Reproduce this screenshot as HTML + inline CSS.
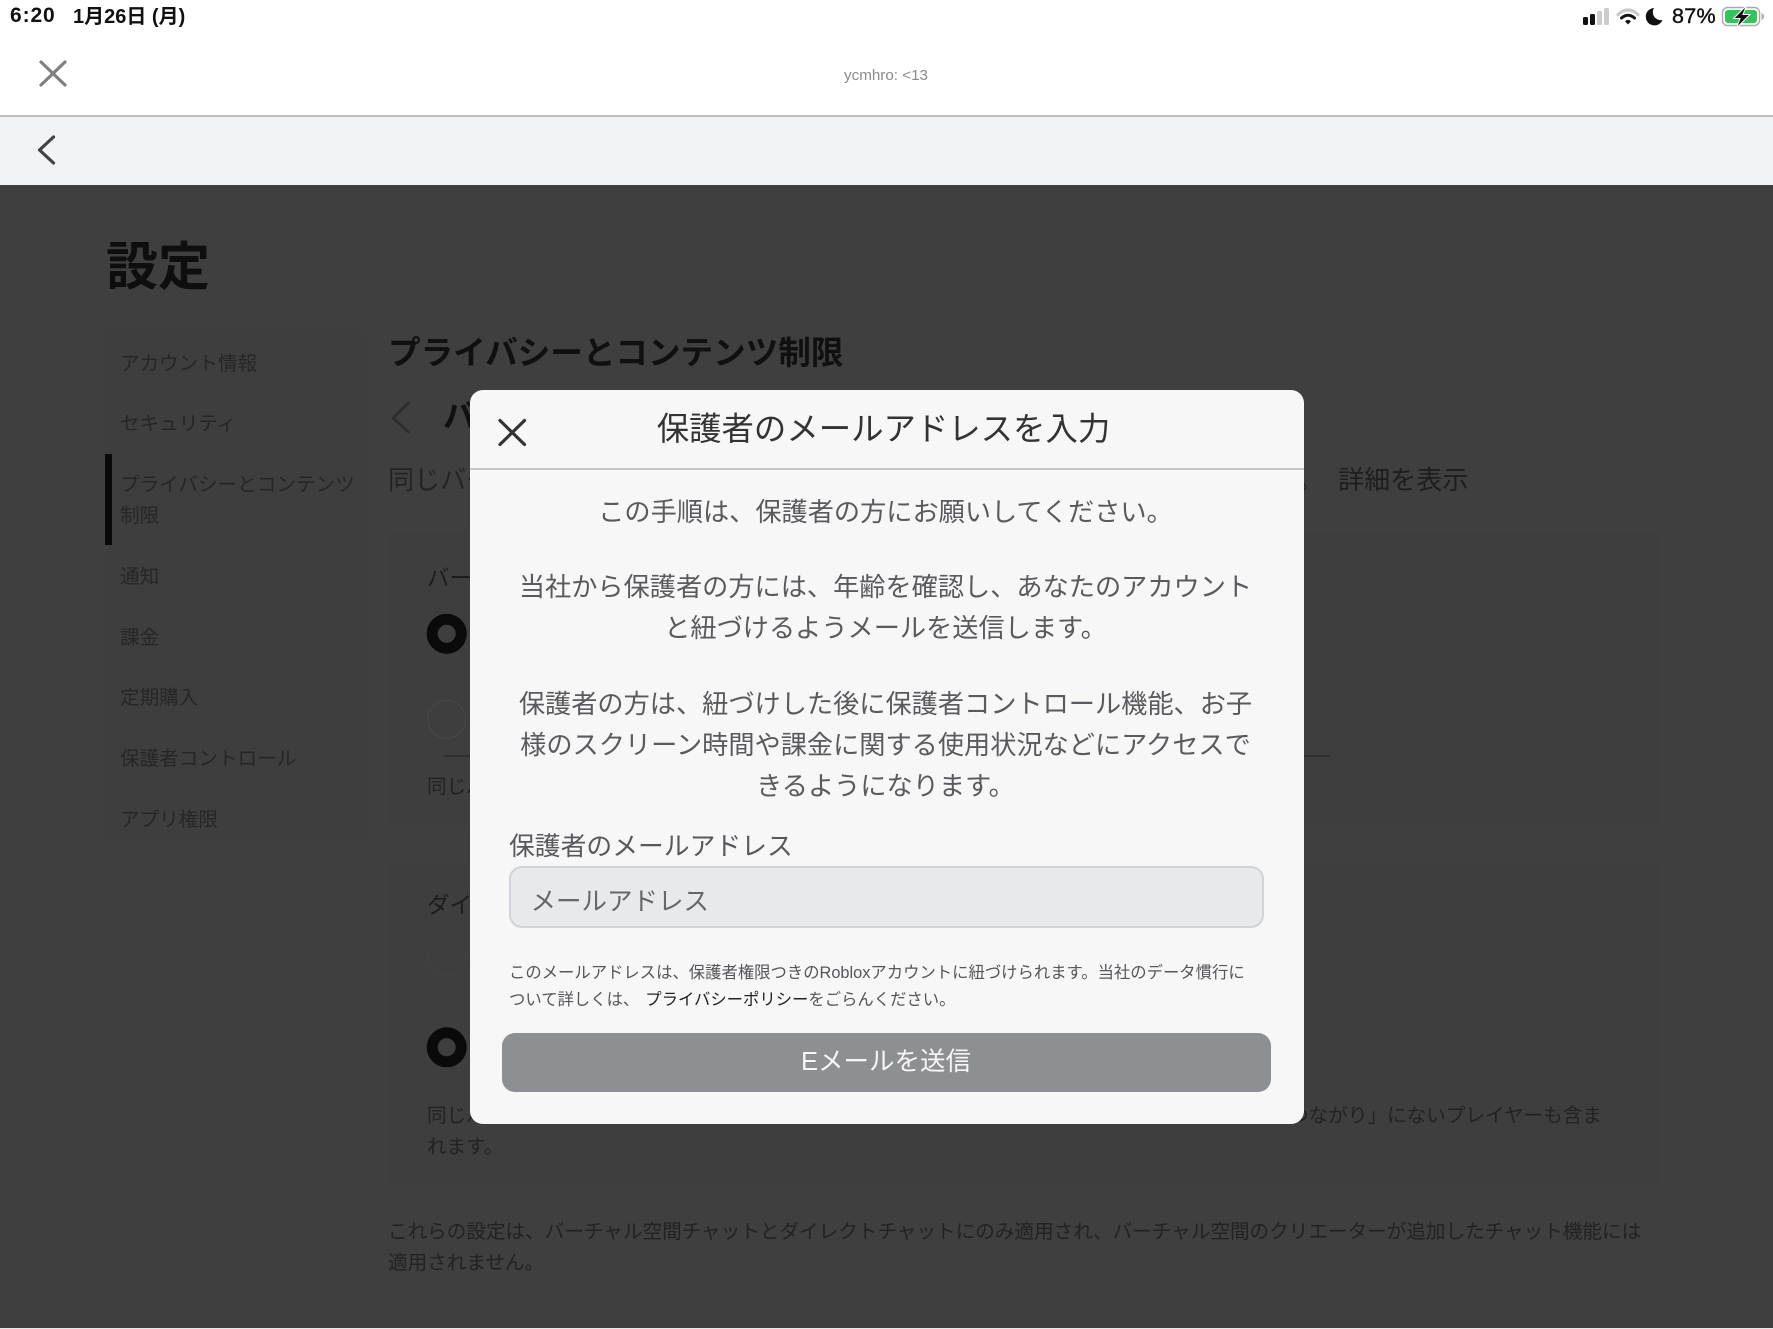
<!DOCTYPE html>
<html lang="ja">
<head>
<meta charset="utf-8">
<title>保護者のメールアドレスを入力</title>
<style>
html,body{margin:0;padding:0;background:#3f3f3f;}
body{width:1773px;height:1329px;position:relative;overflow:hidden;font-family:"Liberation Sans","Noto Sans CJK JP",sans-serif;}
.a{position:absolute;white-space:nowrap;}
.s{font-size:19.6px;line-height:32px;height:32px;color:#262626;left:120px;}
.d{font-size:19.6px;line-height:32px;height:32px;color:#222;}
.m{left:470px;width:833px;text-align:center;font-size:26.2px;line-height:40px;height:40px;color:#5a5a5e;}
</style>
</head>
<body>
<!-- top chrome -->
<div class="a" style="left:0;top:0;width:1773px;height:115px;background:#fff;"></div>
<div class="a" style="left:0;top:115px;width:1773px;height:1.5px;background:#bdbec0;"></div>
<div class="a" style="left:0;top:116.5px;width:1773px;height:68.5px;background:#f2f3f5;"></div>
<div class="a" style="left:10px;top:3px;font-size:21px;line-height:26px;font-weight:700;color:#111;letter-spacing:.9px;">6:20</div>
<div class="a" style="left:73px;top:4px;font-size:20px;line-height:26px;font-weight:700;color:#111;">1月26日 (月)</div>
<div class="a" style="left:786px;width:200px;top:66px;text-align:center;font-size:15.2px;line-height:20px;color:#8a8a8a;">ycmhro: &lt;13</div>

<svg class="a" style="left:0;top:0" width="1773" height="190" viewBox="0 0 1773 190">
  <path d="M41 62L65 85M65 62L41 85" stroke="#808080" stroke-width="3.2" stroke-linecap="round" fill="none"/>
  <path d="M53.5 137L39.5 150L53.5 163" stroke="#404246" stroke-width="3.2" stroke-linecap="round" stroke-linejoin="round" fill="none"/>
  <!-- signal -->
  <rect x="1583" y="17" width="5" height="8" rx="1.5" fill="#111"/>
  <rect x="1590" y="14" width="5" height="11" rx="1.5" fill="#111"/>
  <rect x="1597" y="11" width="5" height="14" rx="1.5" fill="#ccc"/>
  <rect x="1604" y="8" width="5" height="17" rx="1.5" fill="#ccc"/>
  <!-- wifi -->
  <path d="M1618 14.5Q1628 5.5 1638 14.5" stroke="#c8c8c8" stroke-width="3" fill="none" stroke-linecap="round"/>
  <path d="M1621.5 18Q1628 12.5 1634.5 18" stroke="#111" stroke-width="3" fill="none" stroke-linecap="round"/>
  <path d="M1625 21.2Q1628 18.6 1631 21.2L1628 24.5Z" fill="#111"/>
  <!-- moon -->
  <path d="M1654 8A8.7 8.7 0 1 0 1662.5 20A8 8 0 0 1 1654 8Z" fill="#111"/>
  <!-- battery -->
  <rect x="1722.5" y="7.5" width="37" height="18" rx="5" fill="none" stroke="#aaa" stroke-width="1.4"/>
  <rect x="1725" y="10" width="32" height="13" rx="3" fill="#38c25e"/>
  <path d="M1761.5 13V20Q1764 19 1764 16.5Q1764 14 1761.5 13Z" fill="#aaa"/>
  <path d="M1746.5 5.5L1733.5 18.5H1740L1736.5 28L1750 14.5H1743Z" fill="#111" stroke="#fff" stroke-width="1"/>
</svg>
<div class="a" style="left:1672px;top:3px;font-size:21.5px;line-height:26px;color:#111;font-weight:400;letter-spacing:.3px;-webkit-text-stroke:.4px #111;">87%</div>

<!-- dim background -->
<div class="a" style="left:0;top:185px;width:1773px;height:1143px;background:#3f3f3f;"></div>
<div class="a" style="left:0;top:1328px;width:1773px;height:1px;background:#e8e8e8;"></div>
<div class="a" style="left:105px;top:330px;width:260px;height:510px;background:#3e3e3e;"></div>
<div class="a" style="left:388px;top:532px;width:1272px;height:295px;background:#3e3e3e;"></div>
<div class="a" style="left:388px;top:862px;width:1272px;height:325px;background:#3e3e3e;"></div>

<div class="a" style="left:106px;top:232px;font-size:52px;line-height:72px;font-weight:700;color:#0e0e0e;">設定</div>

<!-- sidebar -->
<div class="a s" style="top:348px;">アカウント情報</div>
<div class="a s" style="top:408px;">セキュリティ</div>
<div class="a" style="left:105px;top:454px;width:7px;height:91px;background:#0a0a0a;"></div>
<div class="a s" style="top:469px;">プライバシーとコンテンツ</div>
<div class="a s" style="top:500px;">制限</div>
<div class="a s" style="top:561px;">通知</div>
<div class="a s" style="top:622px;">課金</div>
<div class="a s" style="top:682px;">定期購入</div>
<div class="a s" style="top:743px;">保護者コントロール</div>
<div class="a s" style="top:804px;">アプリ権限</div>

<!-- main behind modal -->
<div class="a" style="left:388px;top:330px;font-size:32.6px;line-height:46px;font-weight:700;color:#101010;">プライバシーとコンテンツ制限</div>
<svg class="a" style="left:380px;top:390px" width="40" height="50" viewBox="0 0 40 50">
  <path d="M28.5 13L13 28L28.5 42" stroke="#2c2c2c" stroke-width="2.6" fill="none" stroke-linecap="round" stroke-linejoin="round"/>
</svg>
<div class="a" style="left:443px;top:393px;font-size:32.6px;line-height:46px;font-weight:700;color:#101010;">バーチャル</div>
<div class="a" style="left:388px;top:461px;font-size:26.1px;line-height:38px;color:#242424;">同じバーチャル空間</div>
<div class="a" style="left:1297px;top:461px;font-size:26.1px;line-height:38px;color:#242424;">。</div>
<div class="a" style="left:1338px;top:461px;font-size:26.1px;line-height:38px;color:#1e1e1e;">詳細を表示</div>

<div class="a" style="left:427px;top:562px;font-size:22.5px;line-height:34px;color:#1c1c1c;">バーチャル</div>
<div class="a" style="left:427px;top:889px;font-size:22.5px;line-height:34px;color:#1c1c1c;">ダイレクト</div>
<svg class="a" style="left:0;top:0" width="1773" height="1329" viewBox="0 0 1773 1329">
  <circle cx="446.7" cy="633.7" r="14.5" fill="none" stroke="#0a0a0a" stroke-width="11"/>
  <circle cx="446.7" cy="719.3" r="19" fill="none" stroke="#474747" stroke-width="1.2"/>
  <circle cx="446.7" cy="957" r="19" fill="none" stroke="#424242" stroke-width="1"/>
  <circle cx="446.7" cy="1047.3" r="14.5" fill="none" stroke="#0a0a0a" stroke-width="11"/>
  <rect x="444" y="755" width="886" height="2" fill="#303030"/>
</svg>
<div class="a d" style="left:427px;top:771px;">同じバーチャル</div>
<div class="a d" style="left:427px;top:1100px;">同じバーチャル</div>
<div class="a d" style="right:171px;top:1100px;">「つながり」にないプレイヤーも含ま</div>
<div class="a d" style="left:427px;top:1131px;">れます。</div>
<div class="a d" style="left:388px;top:1216px;">これらの設定は、バーチャル空間チャットとダイレクトチャットにのみ適用され、バーチャル空間のクリエーターが追加したチャット機能には</div>
<div class="a d" style="left:388px;top:1247px;">適用されません。</div>

<!-- modal -->
<div class="a" style="left:469.5px;top:390px;width:834px;height:734px;background:#f7f7f8;border-radius:13px;"></div>
<div class="a" style="left:469.5px;top:468px;width:834px;height:2px;background:#c6c7c9;"></div>
<svg class="a" style="left:490px;top:410px" width="45" height="45" viewBox="0 0 45 45">
  <path d="M10 10.5L34.5 34.5M34.5 10.5L10 34.5" stroke="#333" stroke-width="3.2" stroke-linecap="round" fill="none"/>
</svg>
<div class="a" style="left:467px;width:833px;top:406px;text-align:center;font-size:32.4px;line-height:46px;color:#333;">保護者のメールアドレスを入力</div>

<div class="a m" style="left:469px;top:492px;">この手順は、保護者の方にお願いしてください。</div>
<div class="a m" style="left:469px;top:567px;">当社から保護者の方には、年齢を確認し、あなたのアカウント</div>
<div class="a m" style="left:469px;top:608px;">と紐づけるようメールを送信します。</div>
<div class="a m" style="left:469px;top:684px;">保護者の方は、紐づけした後に保護者コントロール機能、お子</div>
<div class="a m" style="left:469px;top:725px;">様のスクリーン時間や課金に関する使用状況などにアクセスで</div>
<div class="a m" style="left:469px;top:766px;">きるようになります。</div>

<div class="a" style="left:509px;top:827px;font-size:25.8px;line-height:40px;color:#58585c;">保護者のメールアドレス</div>
<div class="a" style="left:509px;top:866px;width:751px;height:58px;background:#e8e9ec;border:2px solid #d2d3d6;border-radius:13px;"></div>
<div class="a" style="left:530.5px;top:882px;font-size:25.5px;line-height:40px;color:#66676b;">メールアドレス</div>

<div class="a" style="left:509px;top:960px;font-size:16.35px;line-height:26px;color:#55565a;">このメールアドレスは、保護者権限つきのRobloxアカウントに紐づけられます。当社のデータ慣行に</div>
<div class="a" style="left:509px;top:986.5px;font-size:16.35px;line-height:26px;color:#55565a;">ついて詳しくは、<span style="margin-left:6px;color:#232326;">プライバシーポリシー</span>をごらんください。</div>

<div class="a" style="left:502px;top:1033px;width:769px;height:59px;background:#8e8f92;border-radius:13px;"></div>
<div class="a" style="left:502px;width:768px;top:1042px;text-align:center;font-size:25.5px;line-height:40px;color:#f6f6f6;">Eメールを送信</div>
</body>
</html>
